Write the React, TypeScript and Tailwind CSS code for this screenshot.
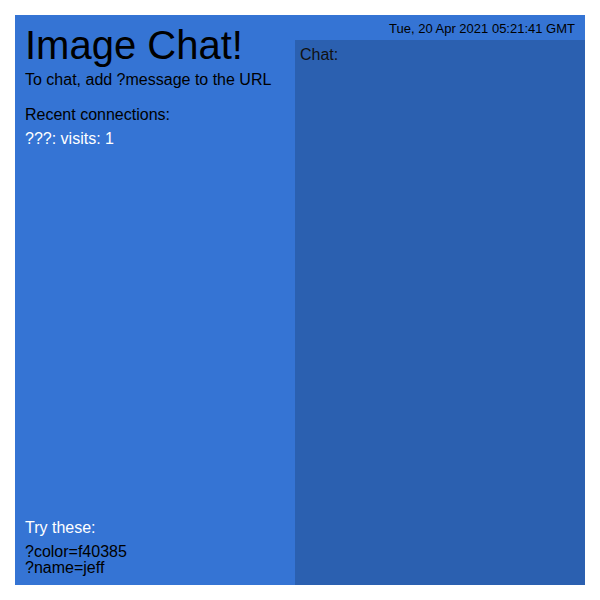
export default function App() {
  return (
    <div className="w-[600px] h-[600px] bg-white p-[15px]" style={{ fontFamily: '"Liberation Sans", Arial, sans-serif' }}>
      <div className="w-[570px] h-[570px] bg-[#3574d4] flex">
        <div className="w-[280px] flex flex-col px-[10px]">
          <h1 className="text-[40px] leading-[46px] text-black mt-[7px]">Image Chat!</h1>
          <p className="text-[16px] leading-[18px] text-black mt-[3px]">To chat, add ?message to the URL</p>
          <p className="text-[16px] leading-[18px] text-black mt-[17px]">Recent connections:</p>
          <p className="text-[16px] leading-[18px] text-white mt-[6px]">???: visits: 1</p>
          <div className="mt-auto mb-[9px]">
            <p className="text-[16px] leading-[18px] text-white">Try these:</p>
            <p className="text-[16px] leading-[16px] text-black mt-[7px]">?color=f40385</p>
            <p className="text-[16px] leading-[16px] text-black">?name=jeff</p>
          </div>
        </div>
        <div className="flex-1 flex flex-col">
          <div className="h-[25px] flex items-center justify-end pr-[10px] pt-[2px] text-[13px] text-black">
            Tue, 20 Apr 2021 05:21:41 GMT
          </div>
          <div className="flex-1 bg-[#2b60b0] px-[5px] pt-[6px]">
            <p className="text-[16px] leading-[18px] text-[#111]">Chat:</p>
          </div>
        </div>
      </div>
    </div>
  );
}
